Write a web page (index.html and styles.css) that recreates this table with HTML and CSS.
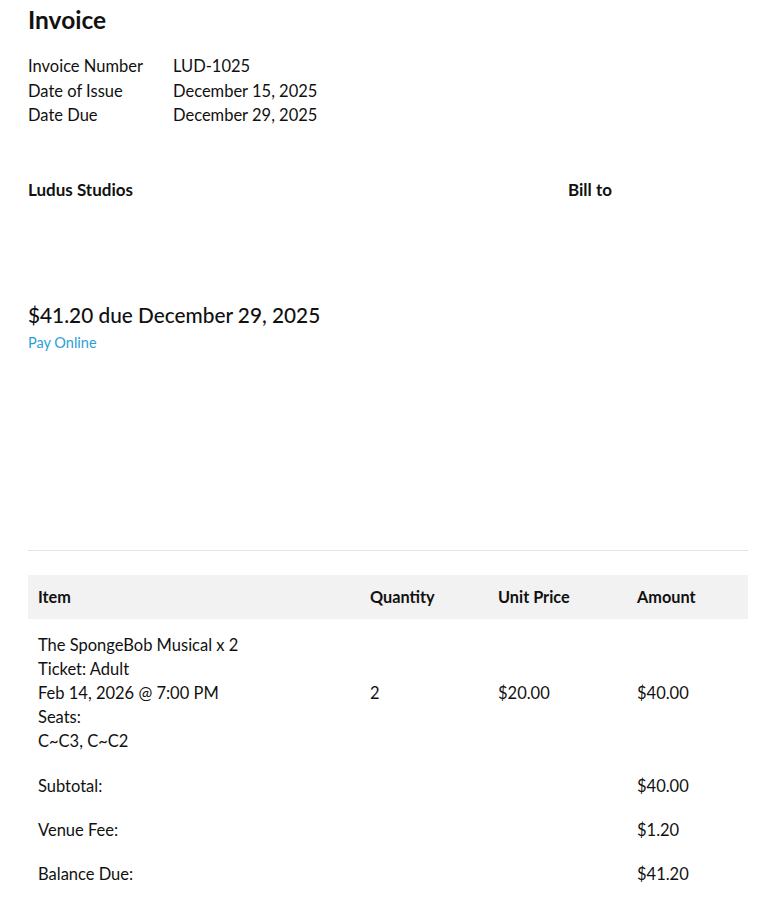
FILE: index.html
```html
<!DOCTYPE html>
<html>
<head>
<meta charset="utf-8">
<link rel="stylesheet" href="styles.css">
</head>
<body>
<div class="page">
  <h1 class="title">Invoice</h1>
  <table class="meta">
    <tr><td class="meta-label">Invoice Number</td><td>LUD-1025</td></tr>
    <tr><td class="meta-label">Date of Issue</td><td>December 15, 2025</td></tr>
    <tr><td class="meta-label">Date Due</td><td>December 29, 2025</td></tr>
  </table>
  <div class="parties">
    <div class="from">Ludus Studios</div>
    <div class="billto">Bill to</div>
  </div>
  <h2 class="due">$41.20 due December 29, 2025</h2>
  <a class="pay" href="#">Pay Online</a>
  <hr class="rule">
  <table class="items">
    <thead>
      <tr><th class="c-item">Item</th><th class="c-qty">Quantity</th><th class="c-unit">Unit Price</th><th class="c-amt">Amount</th></tr>
    </thead>
    <tbody>
      <tr class="line">
        <td>The SpongeBob Musical x 2<br>Ticket: Adult<br>Feb 14, 2026 @ 7:00 PM<br>Seats:<br>C~C3, C~C2</td>
        <td>2</td><td>$20.00</td><td>$40.00</td>
      </tr>
      <tr class="sum"><td>Subtotal:</td><td></td><td></td><td>$40.00</td></tr>
      <tr class="sum"><td>Venue Fee:</td><td></td><td></td><td>$1.20</td></tr>
      <tr class="sum"><td>Balance Due:</td><td></td><td></td><td>$41.20</td></tr>
    </tbody>
  </table>
</div>
</body>
</html>
```
FILE: styles.css
```css
html, body {
  margin: 0;
  padding: 0;
  background: #fff;
}
body {
  font-family: "Lato", "Open Sans", sans-serif;
  color: #111;
  font-size: 16.5px;
}
.page {
  padding: 0 24px 0 28px;
}
.title {
  margin: 0;
  padding-top: 6px;
  font-size: 24.5px;
  font-weight: 700;
  line-height: 28px;
}
.meta {
  border-collapse: collapse;
  margin-top: 20px;
}
.meta td {
  padding: 0;
  line-height: 24.5px;
  font-size: 16.5px;
}
.meta-label {
  width: 145px;
}
.parties {
  display: flex;
  margin-top: 51px;
  height: 100px;
}
.from {
  width: 540px;
  font-weight: 700;
  font-size: 17px;
  line-height: 22px;
}
.billto {
  font-weight: 700;
  font-size: 17px;
  line-height: 22px;
}
.due {
  margin: 0;
  margin-top: 23px;
  font-size: 20.8px;
  font-weight: 500;
  line-height: 26px;
}
.pay {
  display: block;
  margin-top: 6px;
  color: #2a9fd6;
  text-decoration: none;
  font-size: 14.5px;
  line-height: 18px;
}
.rule {
  border: 0;
  border-top: 1px solid #e4e4e4;
  margin: 198px 0 0 0;
}
.items {
  width: 720px;
  border-collapse: collapse;
  margin-top: 24px;
}
.items th {
  background: #f2f2f2;
  text-align: left;
  font-weight: 700;
  height: 44px;
  padding: 0 10px;
  font-size: 16.3px;
}
.c-item { width: 312px; }
.c-qty { width: 108px; }
.c-unit { width: 119px; }
.items td {
  padding: 0 10px;
  font-size: 16.5px;
  line-height: 24px;
  vertical-align: middle;
}
.line td {
  padding-top: 14px;
  padding-bottom: 11px;
}
.sum td {
  height: 44px;
  padding-top: 0;
  padding-bottom: 0;
}
```
